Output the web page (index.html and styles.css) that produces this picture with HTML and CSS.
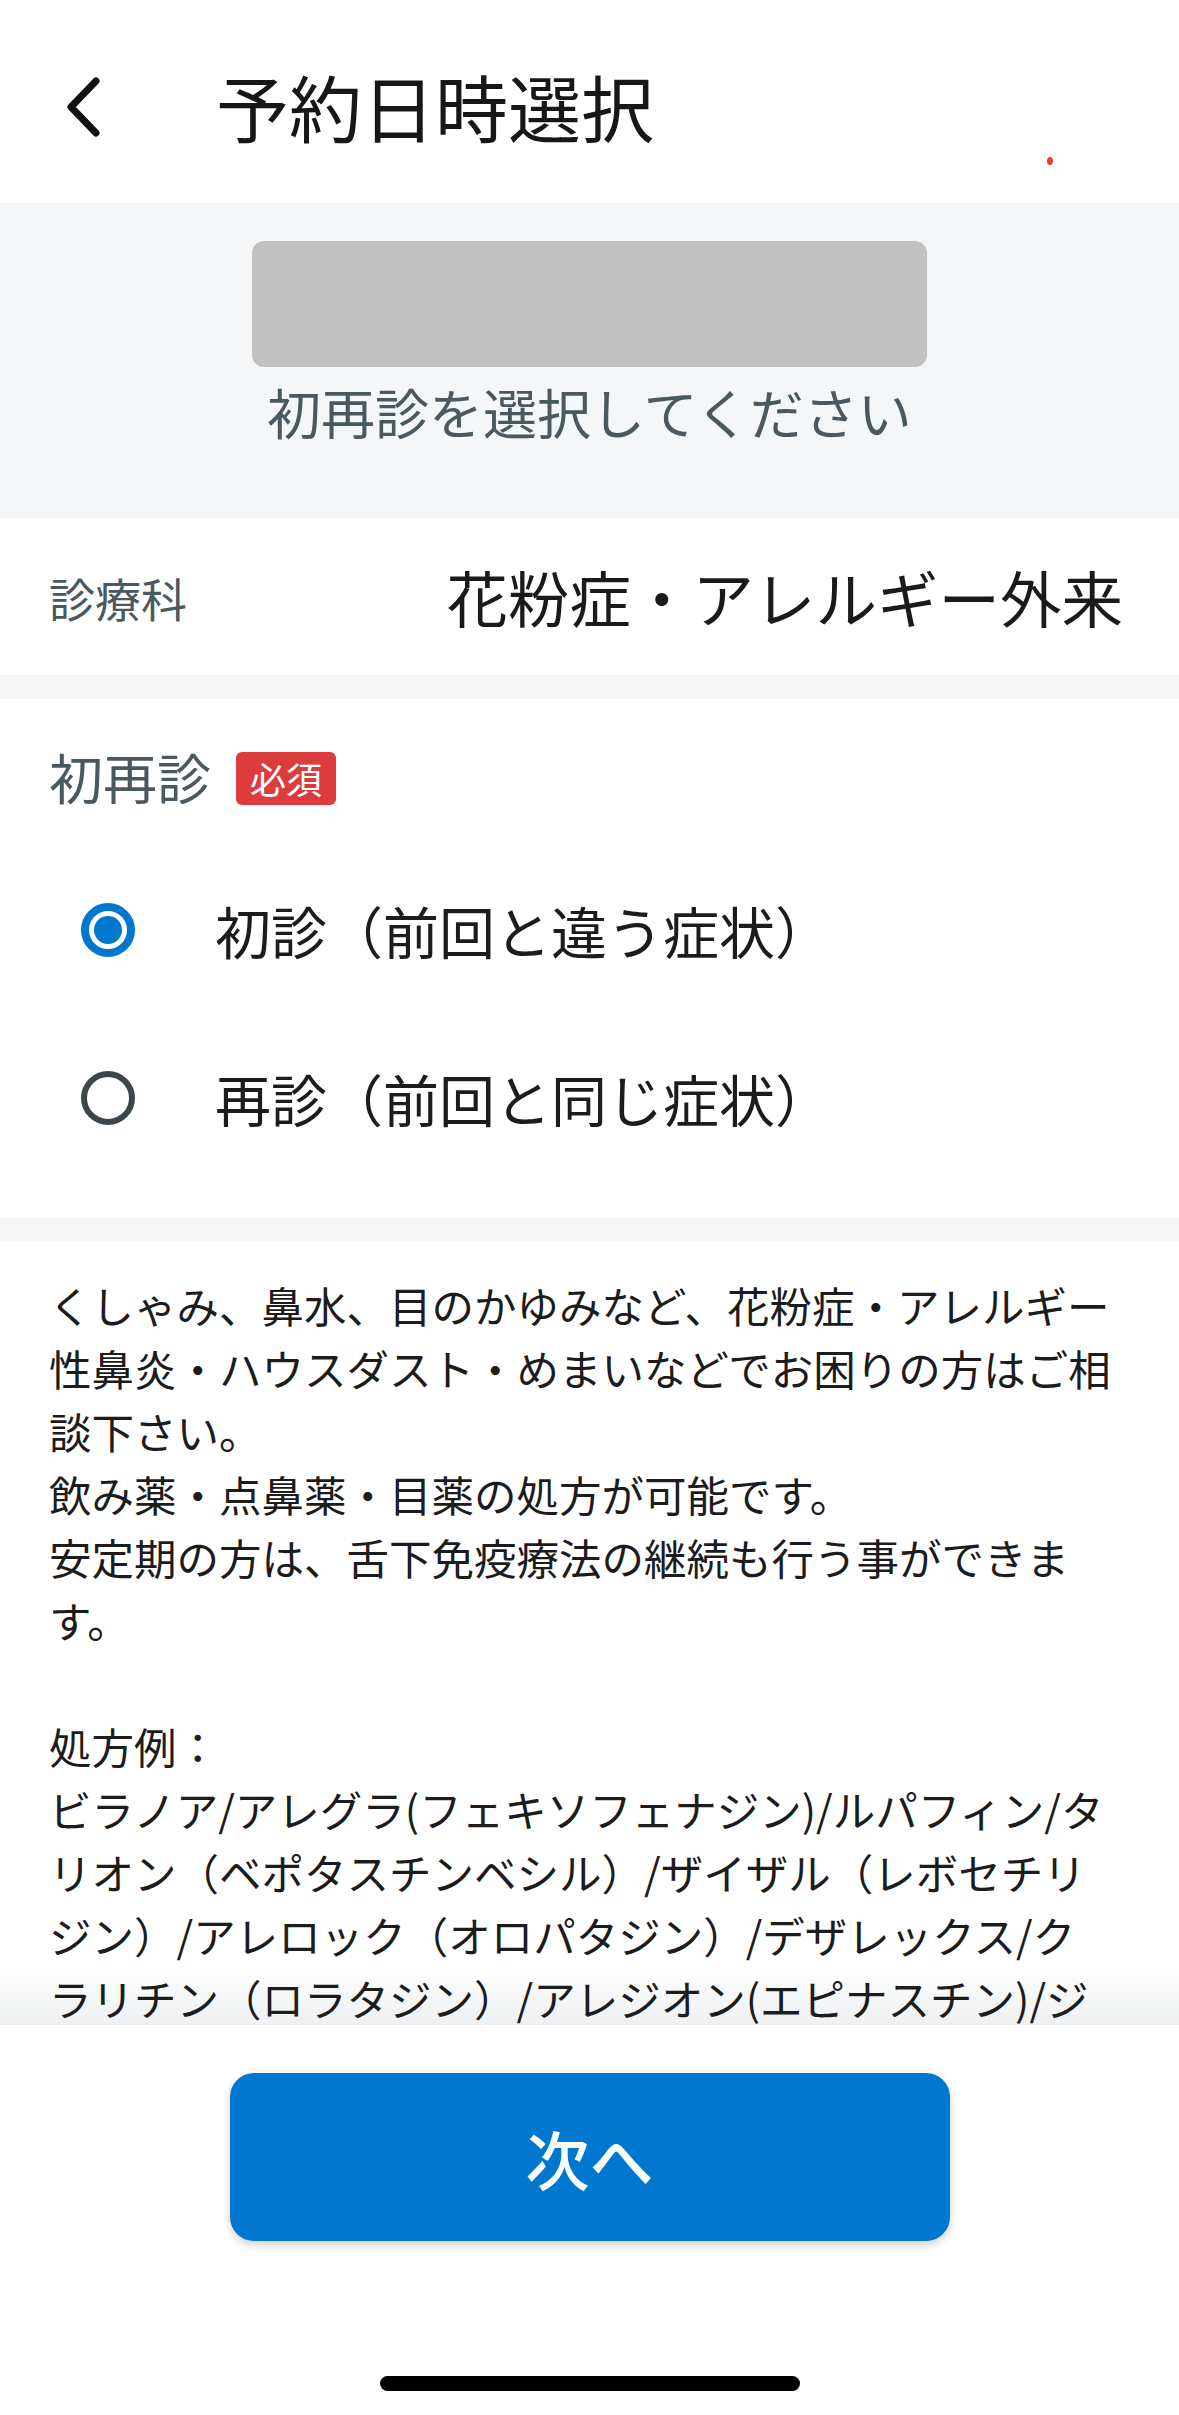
FILE: index.html
```html
<!DOCTYPE html>
<html lang="ja">
<head>
<meta charset="utf-8">
<title>予約日時選択</title>
<link rel="stylesheet" href="styles.css">
</head>
<body>
<div class="screen">
  <header class="header">
    <svg class="back" width="40" height="60" viewBox="0 0 40 60" aria-hidden="true">
      <path d="M33 4 L8 30 L33 56" fill="none" stroke="#111" stroke-width="7" stroke-linecap="round" stroke-linejoin="round"/>
    </svg>
    <h1 class="title">予約日時選択</h1>
    <span class="rec-dot"></span>
  </header>

  <section class="intro">
    <div class="placeholder"></div>
    <p class="intro-text">初再診を選択してください</p>
  </section>

  <section class="dept">
    <span class="dept-label">診療科</span>
    <span class="dept-value">花粉症・アレルギー外来</span>
  </section>

  <section class="visit">
    <div class="visit-head">
      <span class="visit-label">初再診</span>
      <span class="badge">必須</span>
    </div>
    <div class="option">
      <span class="radio radio-on"></span>
      <span class="option-text">初診（前回と違う症状）</span>
    </div>
    <div class="option">
      <span class="radio"></span>
      <span class="option-text">再診（前回と同じ症状）</span>
    </div>
  </section>

  <section class="desc">
    <p class="desc-text">くしゃみ、鼻水、目のかゆみなど、花粉症・アレルギー性鼻炎・ハウスダスト・めまいなどでお困りの方はご相談下さい。<br>飲み薬・点鼻薬・目薬の処方が可能です。<br>安定期の方は、舌下免疫療法の継続も行う事ができます。<br><br>処方例：<br>ビラノア/アレグラ(フェキソフェナジン)/ルパフィン/タ<br>リオン（ベポタスチンベシル）/ザイザル（レボセチリ<br>ジン）/アレロック（オロパタジン）/デザレックス/ク<br>ラリチン（ロラタジン）/アレジオン(エピナスチン)/ジ<br>ルテック（セチリジン）</p>
  </section>

  <footer class="footer">
    <button class="next" type="button">次へ</button>
    <span class="home-indicator"></span>
  </footer>
</div>
</body>
</html>
```

FILE: styles.css
```css
* {
  box-sizing: border-box;
}

html, body {
  margin: 0;
  padding: 0;
  background: #ffffff;
}

body {
  font-family: "Noto Sans CJK JP", "Noto Sans", sans-serif;
  color: #1c1c1c;
  text-spacing-trim: space-all;
}

.screen {
  width: 1179px;
  height: 2415px;
  display: flex;
  flex-direction: column;
  overflow: hidden;
  background: #ffffff;
}

/* Header */
.header {
  position: relative;
  height: 203px;
  flex: none;
  display: flex;
  align-items: center;
  padding: 0 0 0 63px;
  background: #ffffff;
}

.back {
  flex: none;
  margin-top: 10px;
}

.title {
  margin: 8px 0 0 113px;
  font-size: 73px;
  line-height: 73px;
  font-weight: 400;
  color: #151718;
}

.rec-dot {
  position: absolute;
  left: 1047px;
  top: 157px;
  width: 6px;
  height: 8px;
  border-radius: 50%;
  background: #f23a2e;
}

/* Intro band */
.intro {
  height: 315px;
  flex: none;
  background: #f5f6f7;
  display: flex;
  flex-direction: column;
  align-items: center;
  padding-top: 38px;
}

.placeholder {
  width: 675px;
  height: 126px;
  border-radius: 12px;
  background: #c1c1c1;
}

.intro-text {
  margin: 15px 0 0;
  font-size: 54px;
  line-height: 60px;
  color: #4a5860;
}

/* Department row */
.dept {
  height: 157px;
  flex: none;
  display: flex;
  align-items: center;
  justify-content: space-between;
  padding: 0 56px 0 49px;
  background: #ffffff;
  border-bottom: 24px solid #f5f6f7;
  box-sizing: content-box;
}

.dept-label {
  font-size: 46px;
  line-height: 60px;
  color: #4a5860;
}

.dept-value {
  font-size: 61.5px;
  line-height: 70px;
  color: #1a1a1a;
}

/* Visit type */
.visit {
  flex: none;
  height: 519px;
  background: #ffffff;
  padding-top: 48px;
  display: flex;
  flex-direction: column;
}

.visit-head {
  display: flex;
  align-items: center;
  height: 60px;
  padding-left: 49px;
}

.visit-label {
  font-size: 54px;
  line-height: 60px;
  color: #4a5860;
}

.badge {
  margin: 3px 0 0 25px;
  height: 53px;
  padding: 0 14px;
  border-radius: 6px;
  background: #dc3c3e;
  color: #ffffff;
  font-size: 36px;
  line-height: 53px;
}

.option {
  height: 168px;
  display: flex;
  align-items: center;
  padding-left: 81px;
}

.visit-head + .option {
  margin-top: 39px;
}

.radio {
  flex: none;
  width: 54px;
  height: 54px;
  border-radius: 50%;
  border: 6px solid #3c474c;
  display: flex;
  align-items: center;
  justify-content: center;
}

.radio-on {
  border: 8px solid #0078d0;
}

.radio-on::after {
  content: "";
  width: 28px;
  height: 28px;
  border-radius: 50%;
  background: #0078d0;
}

.option-text {
  margin-left: 80px;
  font-size: 56px;
  line-height: 60px;
  color: #1c1c1c;
}

/* Description */
.desc {
  flex: 1 1 auto;
  min-height: 0;
  overflow: hidden;
  border-top: 24px solid #f5f6f7;
  padding: 31px 40px 0 49px;
  background: #ffffff;
}

.desc-text {
  margin: 0;
  font-size: 42.5px;
  line-height: 63px;
  color: #1c1c1c;
  line-break: strict;
}

/* Footer */
.footer {
  position: relative;
  height: 390px;
  flex: none;
  display: flex;
  flex-direction: column;
  align-items: center;
  background: #ffffff;
}

.footer::before {
  content: "";
  position: absolute;
  left: 0;
  right: 0;
  bottom: 100%;
  height: 60px;
  background: linear-gradient(to bottom, rgba(20, 40, 60, 0), rgba(20, 40, 60, 0.07));
}

.next {
  margin-top: 48px;
  width: 720px;
  height: 168px;
  border: none;
  border-radius: 24px;
  background: #0078d0;
  color: #ffffff;
  font-family: "Noto Sans CJK JP", "Noto Sans", sans-serif;
  font-size: 64px;
  font-weight: 500;
  box-shadow: 0 4px 8px rgba(0, 0, 0, 0.18);
}

.home-indicator {
  margin-top: auto;
  margin-bottom: 24px;
  width: 420px;
  height: 15px;
  border-radius: 8px;
  background: #000000;
}
```
